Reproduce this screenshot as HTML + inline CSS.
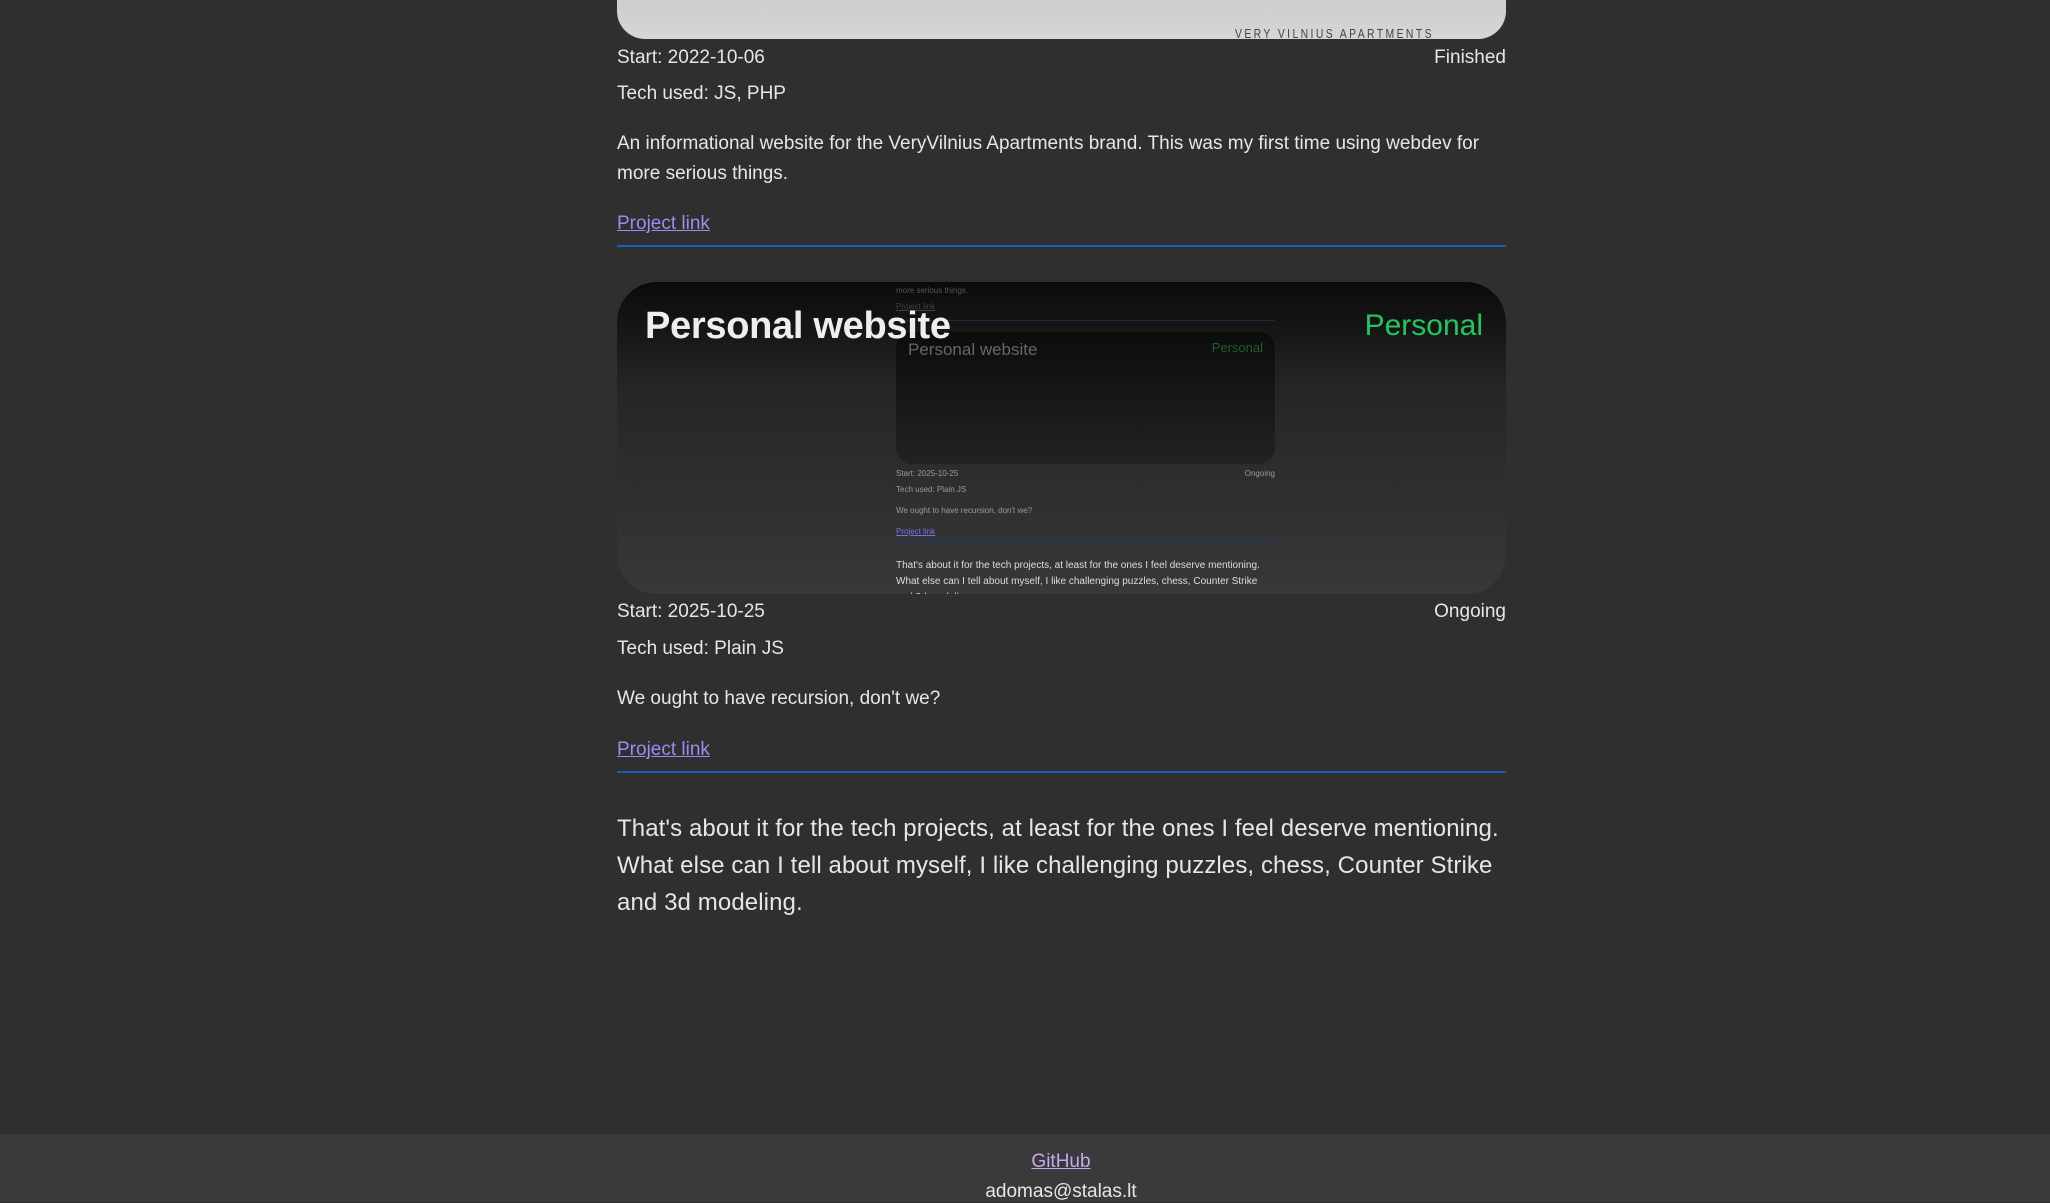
<!DOCTYPE html>
<html><head><meta charset="utf-8"><style>
*{margin:0;padding:0;box-sizing:border-box}
html,body{width:2050px;height:1202px;overflow:hidden;background:#2f2f2f;font-family:"Liberation Sans",sans-serif;color:#e6e6e6}
.a{position:absolute;white-space:nowrap}
.t{font-size:19px;letter-spacing:0}
a{color:#9b8cf0;text-decoration:underline}
.hr{position:absolute;left:617px;width:889px;height:2px;background:#1560b8}
.card{position:absolute;left:617px;top:282px;width:889px;height:312px;border-radius:40px;overflow:hidden;background:linear-gradient(#0a0a0a,#262626 35%,#383838)}
.m{position:absolute;white-space:nowrap;font-size:8px;color:#9a9a9a}
footer{position:absolute;left:0;top:1134px;width:2050px;height:68px;background:#3a3a3a;text-align:center;font-size:19px}
</style></head><body>
<div style="position:absolute;left:617px;top:-20px;width:889px;height:59px;border-radius:0 0 28px 28px;background:linear-gradient(#c8c8c8,#d6d6d6)"></div>
<div class="a" style="left:1235px;top:26px;font-size:13px;letter-spacing:3px;color:#444;transform:scaleX(.8);transform-origin:left">VERY VILNIUS APARTMENTS</div>

<div class="a t" style="left:617px;top:47px">Start: 2022-10-06</div>
<div class="a t" style="right:544px;top:47px">Finished</div>
<div class="a t" style="left:617px;top:83px">Tech used: JS, PHP</div>
<div class="a t" style="left:617px;top:129px;line-height:30px">An informational website for the VeryVilnius Apartments brand. This was my first time using webdev for<br>more serious things.</div>
<div class="a t" style="left:617px;top:213px"><a>Project link</a></div>
<div class="hr" style="top:245px"></div>

<div class="card">
  <div class="m" style="left:279px;top:4px;color:#555">more serious things.</div>
  <div class="m" style="left:279px;top:20px;color:#444"><u>Project link</u></div>
  <div style="position:absolute;left:279px;top:38px;width:379px;height:1px;background:#1a2a44"></div>
  <div style="position:absolute;left:279px;top:50px;width:379px;height:132px;border-radius:16px;background:linear-gradient(#0c0c0c,#222)">
    <div class="m" style="left:12px;top:8px;font-size:17px;color:#666">Personal website</div>
    <div class="m" style="right:12px;top:8px;font-size:13px;color:#235a32">Personal</div>
  </div>
  <div class="m" style="left:279px;top:187px">Start: 2025-10-25</div>
  <div class="m" style="right:231px;top:187px">Ongoing</div>
  <div class="m" style="left:279px;top:203px">Tech used: Plain JS</div>
  <div class="m" style="left:279px;top:224px">We ought to have recursion, don't we?</div>
  <div class="m" style="left:279px;top:245px;color:#7a6fe0"><u>Project link</u></div>
  <div style="position:absolute;left:279px;top:258px;width:379px;height:1px;background:#1a3a6a"></div>
  <div class="m" style="left:279px;top:276px;font-size:10px;line-height:16px;color:#ddd">That's about it for the tech projects, at least for the ones I feel deserve mentioning.<br>What else can I tell about myself, I like challenging puzzles, chess, Counter Strike<br>and 3d modeling.</div>
  <div class="a" style="left:28px;top:23px;font-size:38px;font-weight:bold;color:#eee;letter-spacing:-0.3px">Personal website</div>
  <div class="a" style="right:23px;top:27px;font-size:30px;color:#22c55e">Personal</div>
</div>

<div class="a t" style="left:617px;top:601px">Start: 2025-10-25</div>
<div class="a t" style="right:544px;top:601px">Ongoing</div>
<div class="a t" style="left:617px;top:638px">Tech used: Plain JS</div>
<div class="a t" style="left:617px;top:688px">We ought to have recursion, don't we?</div>
<div class="a t" style="left:617px;top:739px"><a>Project link</a></div>
<div class="hr" style="top:771px"></div>

<div class="a" style="left:617px;top:810px;font-size:24px;line-height:37px;letter-spacing:0.1px">That's about it for the tech projects, at least for the ones I feel deserve mentioning.<br>What else can I tell about myself, I like challenging puzzles, chess, Counter Strike<br>and 3d modeling.</div>

<footer>
<div style="position:absolute;left:961px;width:200px;top:17px"><a style="color:#c9a6f0">GitHub</a></div>
<div style="position:absolute;left:911px;width:300px;top:47px">adomas@stalas.lt</div>
</footer>
</body></html>
